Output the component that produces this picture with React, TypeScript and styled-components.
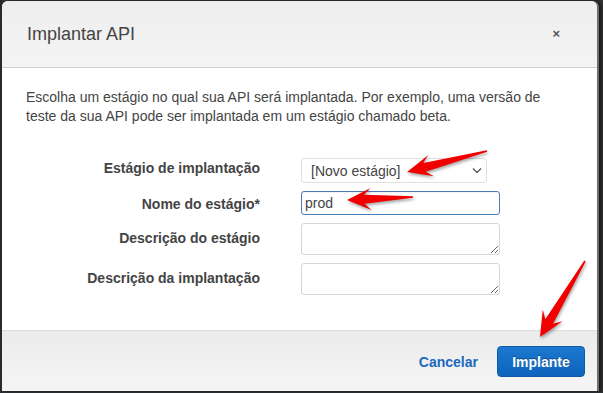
import React from "react";
import styled, { createGlobalStyle } from "styled-components";

const Global = createGlobalStyle`
  html, body { margin: 0; padding: 0; background: #2f3032; }
  body { width: 603px; height: 393px; overflow: hidden; font-family: "Liberation Sans", Arial, sans-serif; }
  #root { position: relative; width: 603px; height: 393px; }
`;

const Page = styled.div`
  width: 603px;
  height: 393px;
  padding: 1px 0 0 2px;
  box-sizing: border-box;
  background: linear-gradient(90deg, #2a2a2a 0, #2a2a2a 2px, #2f3032 2px);
`;

const Modal = styled.div`
  width: 595px;
  height: 390px;
  display: flex;
  flex-direction: column;
  background: #fff;
  border-radius: 6px 6px 0 0;
  overflow: hidden;
  box-shadow: 2px 0 0 #6f6f6f, 4px 0 3px rgba(0, 0, 0, 0.5);
`;

const Header = styled.div`
  height: 66px;
  flex: none;
  display: flex;
  align-items: center;
  justify-content: space-between;
  padding: 0 37px 0 25px;
  background: linear-gradient(#eeeeee, #f4f4f4);
  border-bottom: 1px solid #cfcfcf;
`;

const Title = styled.h1`
  margin: 0;
  font-size: 18px;
  font-weight: normal;
  color: #444;
  line-height: 22px;
`;

const Close = styled.span`
  font-size: 13px;
  font-weight: bold;
  color: #555;
  line-height: 1;
  margin-top: -2px;
`;

const Body = styled.div`
  flex: 1;
  padding: 20px 24px 0 24px;
  display: flex;
  flex-direction: column;
`;

const Intro = styled.p`
  margin: 0;
  font-size: 14px;
  line-height: 19px;
  color: #444;
`;

const Form = styled.div`
  margin-top: 32px;
  display: grid;
  grid-template-columns: 234px auto;
  column-gap: 41px;
  row-gap: 8px;
  justify-content: start;
`;

const Label = styled.label<{ $offset: number }>`
  text-align: right;
  font-size: 14px;
  font-weight: bold;
  color: #444;
  line-height: 20px;
  padding-top: ${(p) => p.$offset}px;
`;

const SelectWrap = styled.div`
  position: relative;
  width: 186px;
  height: 25px;
`;

const Select = styled.select`
  appearance: none;
  -webkit-appearance: none;
  width: 100%;
  height: 100%;
  box-sizing: border-box;
  border: 1px solid #dedede;
  border-radius: 3px;
  background: #fff;
  padding: 0 0 0 9px;
  font-family: "Liberation Sans", Arial, sans-serif;
  font-size: 14px;
  color: #444;
  outline: none;
`;

const Chevron = styled.svg`
  position: absolute;
  right: 5px;
  top: 9px;
  pointer-events: none;
`;

const TextInput = styled.input`
  width: 199px;
  height: 24px;
  box-sizing: border-box;
  border: 1px solid #4a7cb8;
  border-radius: 3px;
  padding: 0 0 0 3px;
  font-family: "Liberation Sans", Arial, sans-serif;
  font-size: 14px;
  color: #444;
  outline: none;
  box-shadow: inset 0 1px 1px rgba(0, 0, 0, 0.05);
`;

const TextArea = styled.textarea`
  width: 199px;
  height: 32px;
  box-sizing: border-box;
  border: 1px solid #d6d6d6;
  border-radius: 3px;
  padding: 3px;
  font-family: "Liberation Sans", Arial, sans-serif;
  font-size: 14px;
  outline: none;
  display: block;
`;

const Footer = styled.div`
  height: 61px;
  flex: none;
  display: flex;
  align-items: center;
  justify-content: flex-end;
  gap: 19px;
  padding: 1px 12px 0 0;
  box-sizing: border-box;
  background: linear-gradient(#ebebeb, #f5f5f5);
  border-top: 1px solid #dcdcdc;
`;

const LinkButton = styled.button`
  border: none;
  background: none;
  padding: 0;
  font-family: "Liberation Sans", Arial, sans-serif;
  font-size: 14px;
  font-weight: bold;
  color: #1a68bd;
  cursor: pointer;
`;

const PrimaryButton = styled.button`
  width: 88px;
  height: 31px;
  border: 1px solid #0d5aa7;
  border-radius: 4px;
  background: linear-gradient(#1c78d0, #0d64bb);
  color: #fff;
  font-family: "Liberation Sans", Arial, sans-serif;
  font-size: 14px;
  font-weight: bold;
  text-shadow: 0 -1px 0 rgba(0, 0, 0, 0.35);
  cursor: pointer;
`;

const Overlay = styled.svg`
  position: absolute;
  left: 0;
  top: 0;
  pointer-events: none;
  filter: drop-shadow(1px 2px 1.5px rgba(0, 0, 0, 0.35));
`;

type Pt = [number, number];

function arrow(tail: Pt, tip: Pt, headLen: number, headW: number, shaftW: number): string {
  const dx = tip[0] - tail[0];
  const dy = tip[1] - tail[1];
  const len = Math.hypot(dx, dy);
  const ux = dx / len;
  const uy = dy / len;
  const nx = -uy;
  const ny = ux;
  const at = (d: number, w: number): Pt => [tip[0] - ux * d + nx * w, tip[1] - uy * d + ny * w];
  const pts: Pt[] = [
    [tail[0] + nx * 0.8, tail[1] + ny * 0.8],
    at(headLen * 0.72, shaftW),
    at(headLen, headW),
    tip,
    at(headLen, -headW),
    at(headLen * 0.72, -shaftW),
    [tail[0] - nx * 0.8, tail[1] - ny * 0.8],
  ];
  return pts.map((p) => `${p[0].toFixed(1)},${p[1].toFixed(1)}`).join(" ");
}

const ARROWS = [
  arrow([487, 151], [407, 172], 25, 11, 4.5),
  arrow([413, 197], [347, 200], 24, 11, 4.5),
  arrow([585, 261], [540, 337], 25, 11.5, 4.5),
];

export default function App() {
  return (
    <>
      <Global />
      <Page>
        <Modal>
          <Header>
            <Title>Implantar API</Title>
            <Close>×</Close>
          </Header>
          <Body>
            <Intro>
              Escolha um estágio no qual sua API será implantada. Por exemplo, uma versão de teste da sua API pode
              ser implantada em um estágio chamado beta.
            </Intro>
            <Form>
              <Label $offset={0}>Estágio de implantação</Label>
              <SelectWrap>
                <Select defaultValue="novo">
                  <option value="novo">[Novo estágio]</option>
                </Select>
                <Chevron width="10" height="7" viewBox="0 0 10 7">
                  <polyline points="1,1.5 5,5.5 9,1.5" fill="none" stroke="#555" strokeWidth="1.3" />
                </Chevron>
              </SelectWrap>
              <Label $offset={3}>Nome do estágio*</Label>
              <TextInput defaultValue="prod" />
              <Label $offset={5}>Descrição do estágio</Label>
              <TextArea />
              <Label $offset={5}>Descrição da implantação</Label>
              <TextArea />
            </Form>
          </Body>
          <Footer>
            <LinkButton>Cancelar</LinkButton>
            <PrimaryButton>Implante</PrimaryButton>
          </Footer>
        </Modal>
      </Page>
      <Overlay width="603" height="393" viewBox="0 0 603 393">
        {ARROWS.map((p, i) => (
          <polygon key={i} points={p} fill="#f20000" />
        ))}
      </Overlay>
    </>
  );
}
